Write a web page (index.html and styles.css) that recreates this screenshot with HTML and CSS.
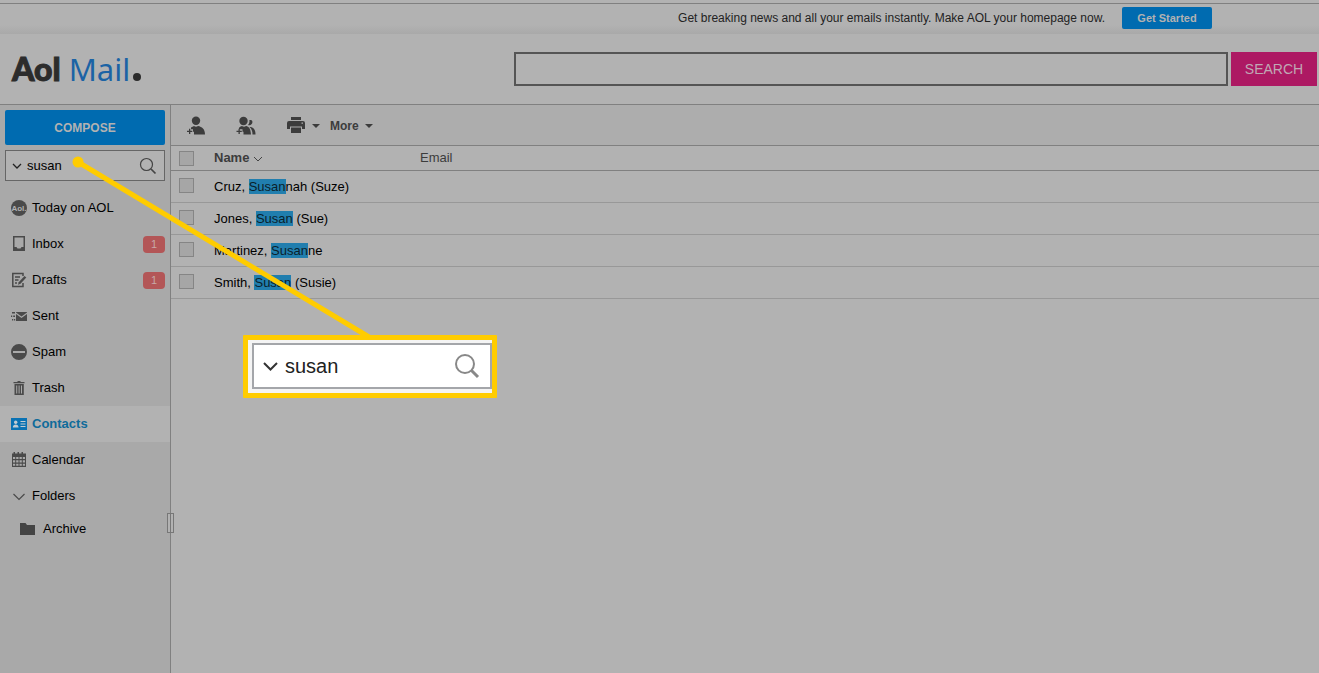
FILE: index.html
```html
<!DOCTYPE html>
<html lang="en">
<head>
<meta charset="utf-8">
<title>AOL Mail - Contacts</title>
<link rel="stylesheet" href="styles.css">
</head>
<body>
<div class="promo">
  <span>Get breaking news and all your emails instantly. Make AOL your homepage now.</span>
  <button class="promo-btn" type="button">Get Started</button>
</div>
<header class="header">
  <a class="logo" href="#"><span class="logo-aol">Aol</span><span class="logo-mail">Mail</span><span class="logo-dot"></span></a>
  <form class="web-search">
    <input class="web-input" type="text" aria-label="Search the web">
    <button class="web-btn" type="button">SEARCH</button>
  </form>
</header>
<div class="body">
  <aside class="sidebar">
    <button class="compose" type="button">COMPOSE</button>
    <div class="find">
      <svg width="10" height="6" viewBox="0 0 10 6"><path d="M1 1l4 4 4-4" fill="none" stroke="#222" stroke-width="1.3"/></svg>
      <input class="find-input" type="text" value="susan" aria-label="Search mail">
      <svg width="18" height="18" viewBox="0 0 18 18"><g fill="none" stroke="#444"><circle cx="7.5" cy="7.5" r="6" stroke-width="1.2"/><path d="M12 12l4.500 4.500" stroke-width="1.700"/></g></svg>
    </div>
    <nav class="nav">
      <a class="item" href="#"><svg class="ico" viewBox="0 0 16 16"><circle cx="8" cy="8" r="8" fill="#4a4a4a"/><text x="8" y="11" text-anchor="middle" class="ico-text">Aol.</text></svg>Today on AOL</a>
      <a class="item" href="#"><svg class="ico" viewBox="0 0 16 16"><path fill="#4a4a4a" fill-rule="evenodd" d="M2 0h12v15H2zM3.500 1.500v9.500H5.500l1 1.500h3l1-1.500h2V1.500z"/></svg>Inbox<span class="badge">1</span></a>
      <a class="item" href="#"><svg class="ico" viewBox="0 0 16 16"><path fill="none" stroke="#4a4a4a" stroke-width="1.500" d="M12 4V1.500H1.800v13H12V11M4 5h5M4 8h3.500M4 11h2"/><path fill="#4a4a4a" d="M13.500 4l1.800 1.600-5.800 6.200-2.500 1 .7-2.600z"/></svg>Drafts<span class="badge">1</span></a>
      <a class="item" href="#"><svg class="ico" viewBox="0 0 16 16"><path fill="#4a4a4a" d="M5 4.500l5.500 4 5.500-4V4H5zM5 6v7h11V6l-5.500 4zM1 4h3v1.400H1zM0 7.500h1.200v1.400H0zM2.200 7.500H4v1.400H2.200zM1 11h1.200v1.400H1zM3 11h1.200v1.400H3z"/></svg>Sent</a>
      <a class="item" href="#"><svg class="ico" viewBox="0 0 16 16"><path fill="#4a4a4a" fill-rule="evenodd" d="M8 0a8 8 0 1 1 0 16A8 8 0 0 1 8 0zM2 7v2h12V7z"/></svg>Spam</a>
      <a class="item" href="#"><svg class="ico" viewBox="0 0 16 16"><path fill="#4a4a4a" fill-rule="evenodd" d="M2.500 2h4V1h3v1h4v1.300h-11zM3.500 4h9.300v11H3.500zM5.200 5.500v8h1v-8zM7.600 5.500v8h1v-8zM10 5.500v8h1v-8z"/></svg>Trash</a>
      <a class="item item-on" href="#"><svg class="ico" viewBox="0 0 16 16"><rect y="2" width="16" height="12" fill="#0a72b3"/><circle cx="4.700" cy="6.300" r="1.700" fill="#c2ccd2"/><path d="M1.800 11.500c0-4 5.800-4 5.800 0zM9.500 5h5v1h-5zM9.500 7.500h5v1h-5zM9.500 10h5v1h-5z" fill="#c2ccd2"/></svg>Contacts</a>
      <a class="item" href="#"><svg class="ico" viewBox="0 0 16 16"><path fill="#4a4a4a" fill-rule="evenodd" d="M1 1.500h1.500V0H4v1.500h2.500V0H8v1.500h2.500V0H12v1.500h3V15H1zM2 5v2h2.200V5zM5.200 5v2h2.300V5zM8.500 5v2h2.300V5zM11.800 5v2H14V5zM2 8.300v2.300h2.200V8.300zM5.200 8.300v2.300h2.300V8.300zM8.500 8.300v2.300h2.300V8.300zM11.800 8.300v2.300H14V8.300zM2 11.800v2h2.200v-2zM5.200 11.800v2h2.300v-2zM8.500 11.800v2h2.300v-2zM11.800 11.800v2H14v-2z"/></svg>Calendar</a>
      <a class="item" href="#"><svg class="ico" viewBox="0 0 16 16"><path d="M2.500 6L8 11.500 13.500 6" fill="none" stroke="#4a4a4a" stroke-width="1.200"/></svg>Folders</a>
      <a class="item item-sub" href="#"><svg class="ico" viewBox="0 0 16 16"><path fill="#444" d="M0 2h5.500l1.500 2h8v10H0z"/></svg>Archive</a>
    </nav>
    <span class="grip"></span>
  </aside>
  <main class="main">
    <div class="toolbar">
      <button class="tool" type="button" aria-label="Add contact"><svg width="20" height="20" viewBox="0 0 20 20"><circle cx="10" cy="4.800" r="4.200" fill="#3c3c3c"/><path fill="#3c3c3c" d="M5 11.500Q6.500 10.500 8 10q2 1.300 4 0c4 .8 7 3 7 8.500H8v-2.800H7v-2.500H5zM3 12.700h1.300v2h2V16h-2v2H3v-2H1v-1.300h2z"/></svg></button>
      <button class="tool" type="button" aria-label="Add group"><svg width="20" height="20" viewBox="0 0 20 20"><circle cx="7.500" cy="5" r="4.200" fill="#3c3c3c"/><path fill="#3c3c3c" d="M3 11.700q1.500-1.200 3-1.600 2 1.200 4 0c3.500.8 4.500 3 5 8.400H7.500v-2.800H6.500v-2.500H3zM2.500 12.700h1.300v2h2V16h-2v2H2.500v-2h-2v-1.300h2zM12 9c1.300-1.300 1.700-3 1.400-5 3.400-.8 3.600 2.500 2.300 4-1 1.300-2.400 1.600-3.700 1zM13.500 11c4 0 6 2.500 6 7.500h-3c0-3-.7-5.500-3-7.500z"/></svg></button>
      <button class="tool tool-print" type="button" aria-label="Print"><svg width="18" height="18" viewBox="0 0 18 18"><path fill="#3c3c3c" fill-rule="evenodd" d="M4 0h10v3H4zM2 4h14q2 0 2 2v6h-3V9.500H3V12H0V6q0-2 2-2zM14.500 5.500v1.200H16V5.500zM4 10.500h10V16H4z"/></svg><i class="caret"></i></button>
      <button class="tool tool-more" type="button">More<i class="caret"></i></button>
    </div>
    <table class="contacts">
      <thead><tr><th class="c-check"><input type="checkbox" aria-label="Select all"></th><th class="c-name">Name <svg width="10" height="6" viewBox="0 0 10 6"><path d="M1 1l4 4 4-4" fill="none" stroke="#444"/></svg></th><th class="c-email">Email</th></tr></thead>
      <tbody>
        <tr><td class="pick"><input type="checkbox" aria-label="Select Cruz, Susannah"></td><td>Cruz, <mark>Susan</mark>nah (Suze)</td><td></td></tr>
        <tr><td class="pick"><input type="checkbox" aria-label="Select Jones, Susan"></td><td>Jones, <mark>Susan</mark> (Sue)</td><td></td></tr>
        <tr><td class="pick"><input type="checkbox" aria-label="Select Martinez, Susanne"></td><td>Martinez, <mark>Susan</mark>ne</td><td></td></tr>
        <tr><td class="pick"><input type="checkbox" aria-label="Select Smith, Susan"></td><td>Smith, <mark>Susan</mark> (Susie)</td><td></td></tr>
      </tbody>
    </table>
  </main>
</div>
<svg class="pointer" width="380" height="345" viewBox="0 0 380 345"><circle cx="78" cy="162" r="5.500" fill="#fc0"/><path d="M78 162L369 337" stroke="#fc0" stroke-width="5"/></svg>
<div class="callout">
  <div class="callout-box">
    <svg width="15" height="9" viewBox="0 0 15 9"><path d="M1 1l6.500 6.500L14 1" fill="none" stroke="#333" stroke-width="2"/></svg>
    <input class="callout-input" type="text" value="susan" aria-label="Search mail, enlarged">
    <svg width="26" height="26" viewBox="0 0 26 26"><g fill="none" stroke="#888"><circle cx="11" cy="11" r="9" stroke-width="2"/><path d="M17.500 17.500l6.500 6.500" stroke-width="3"/></g></svg>
  </div>
</div>
</body>
</html>
```
FILE: styles.css
```css
* { box-sizing: border-box; }
body {
  margin: 0;
  min-height: 100vh;
  display: flex;
  flex-direction: column;
  position: relative;
  background: #b2b2b2;
  color: #000;
  font: 13px/16px "Liberation Sans", Arial, sans-serif;
}
a { color: inherit; text-decoration: none; }
button, input { font: inherit; color: inherit; margin: 0; padding: 0; border: 0; background: none; }
svg { display: block; flex: none; }
.promo {
  display: flex;
  align-items: center;
  justify-content: flex-end;
  gap: 17px;
  margin-top: 3px;
  padding: 3px 107px 5px 0;
  border-top: 1px solid #808080;
  background: linear-gradient(#b2b2b2 70%, #a9a9a9);
  font-size: 12px;
  color: #222;
}
.promo-btn {
  width: 90px;
  height: 22px;
  border-radius: 2px;
  background: #006bb0;
  color: #b2b2b2;
  font-size: 11px;
  font-weight: bold;
}
.header {
  display: flex;
  align-items: center;
  justify-content: space-between;
  height: 71px;
  padding: 0 2px 0 12px;
  border-bottom: 1px solid #808080;
}
.logo { display: flex; align-items: baseline; color: #2c2c2c; }
.logo-aol { font: 900 32px/36px Lato, sans-serif; -webkit-text-stroke: 1px #2c2c2c; }
.logo-mail { margin-left: 8px; font: 31px/36px "Noto Sans", sans-serif; color: #1b63a5; }
.logo-dot { width: 8px; height: 8px; margin-left: 3px; border-radius: 50%; background: #2c2c2c; }
.web-search { display: flex; gap: 3px; width: 61.5%; }
.web-input { flex: 1; height: 34px; padding: 0 8px; border: 2px solid #555; }
.web-btn { width: 86px; height: 34px; background: #ad1963; color: #c0a8b4; font-size: 14px; }
.body { flex: 1; display: flex; }
.sidebar {
  position: relative;
  width: 171px;
  padding-top: 5px;
  border-right: 1px solid #808080;
  background: #a9a9a9;
}
.compose {
  display: block;
  width: 160px;
  height: 35px;
  margin: 0 5px;
  border-radius: 2px;
  background: #006bb0;
  color: #b2b2b2;
  font-size: 12px;
  font-weight: bold;
}
.find {
  display: flex;
  align-items: center;
  gap: 5px;
  height: 31px;
  margin: 5px 5px 9px;
  padding: 0 7px 0 6px;
  border: 1px solid #666;
  background: #b2b2b2;
}
.find-input { flex: 1; min-width: 0; }
.item { display: flex; align-items: center; gap: 5px; height: 36px; padding: 0 5px 0 11px; }
.ico { width: 16px; height: 16px; }
.ico-text { font: bold 8px "Liberation Sans", Arial, sans-serif; fill: #b2b2b2; }
.item-on { background: #b2b2b2; color: #0f6b9a; font-weight: bold; }
.item-sub { height: 30px; padding-left: 20px; gap: 7px; }
.badge {
  width: 22px;
  margin-left: auto;
  border-radius: 4px;
  background: #b35657;
  color: #c8a8a8;
  font-size: 11px;
  line-height: 17px;
  text-align: center;
}
.grip {
  position: absolute;
  top: 408px;
  right: -4px;
  width: 7px;
  height: 20px;
  border: 1px solid #777;
  background: linear-gradient(90deg, #b2b2b2 2px, #777 2px, #777 3px, #b2b2b2 3px);
}
.main { flex: 1; min-width: 0; }
.toolbar {
  display: flex;
  align-items: center;
  height: 41px;
  padding: 1px 0 0 15px;
  border-bottom: 1px solid #808080;
  background: #adadad;
}
.tool { display: flex; align-items: center; margin-right: 30px; }
.tool-print { gap: 7px; margin: 0 10px 0 1px; }
.tool-more { gap: 6px; margin: 0; color: #3c3c3c; font-size: 12px; font-weight: bold; }
.caret { border: 4px solid transparent; border-top-color: #3c3c3c; border-bottom: 0; }
.contacts { width: 100%; border-collapse: separate; border-spacing: 0; table-layout: fixed; }
.contacts th { height: 25px; padding: 0; border-bottom: 1px solid #808080; color: #3c3c3c; text-align: left; }
.contacts td { height: 32px; padding: 0; border-bottom: 1px solid #989898; }
.contacts td.pick { padding-bottom: 3px; }
.contacts .c-check { width: 43px; }
.contacts .c-name { width: 206px; }
.contacts .c-email { font-weight: normal; }
.c-name svg { display: inline-block; vertical-align: middle; }
.contacts input {
  appearance: none;
  display: block;
  width: 15px;
  height: 15px;
  margin-left: 8px;
  border: 1px solid #858585;
  background: #a6a6a6;
}
.contacts mark { background: #217eae; color: #0a1f2b; }
.pointer { position: absolute; left: 0; top: 0; pointer-events: none; }
.callout {
  position: absolute;
  left: 243px;
  top: 335px;
  width: 254px;
  padding: 3px 0 4px 4px;
  border: 5px solid #fc0;
  border-radius: 1px;
  background: #f4f4f4;
}
.callout-box {
  display: flex;
  align-items: center;
  gap: 7px;
  height: 46px;
  padding: 0 10px 0 9px;
  border: 2px solid #a4a6aa;
  background: #fff;
}
.callout-input { flex: 1; min-width: 0; height: 30px; font-size: 20px; color: #222; }
```
